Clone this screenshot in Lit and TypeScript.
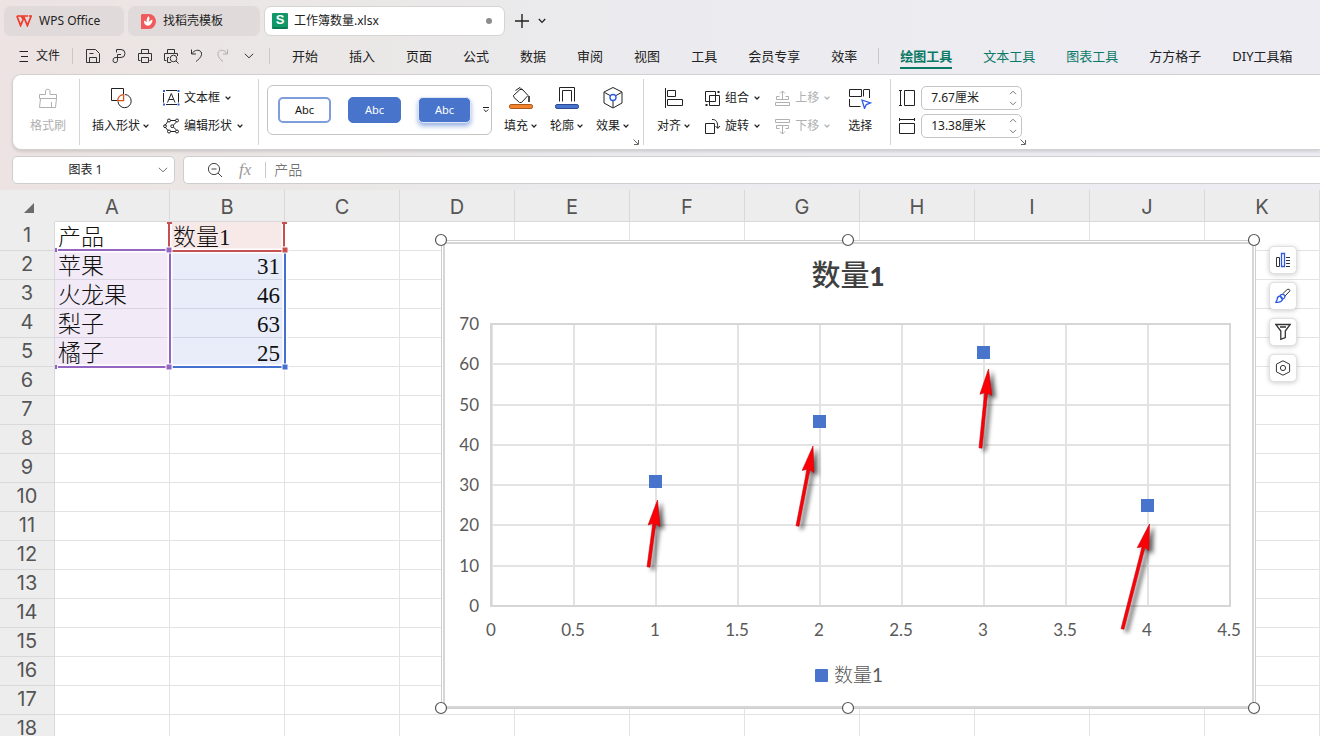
import { LitElement, html, svg, css } from "lit";
import { customElement, state } from "lit/decorators.js";
import { classMap } from "lit/directives/class-map.js";

const draw = (w: number, h: number, body: unknown) =>
  html`<svg class="ico" width=${w} height=${h} viewBox="0 0 ${w} ${h}" aria-hidden="true">${body}</svg>`;

const icons = {
  wps: draw(16, 12, svg`<path stroke="#f03a2a" stroke-width="1.7" d="M.9 1H12.2M.9 1L4.6 10.6L8 2.4L11.4 10.6L15.2 1H13M5 1L8 5"/>`),
  docer: draw(16, 16, svg`<path fill="#f05a5c" stroke="none" d="M2 1H9A6.5 7 0 0 1 9 16H1V2Z"/><path fill="#fff" stroke="none" d="M8.6 3C10 5 9.6 7 8.4 9C10 8.2 11 7 12.4 6.6C12.6 10 10.6 12.6 7.8 12.8C5.4 12.8 3.8 10.6 4 7.6C5.2 8 6 8.6 6.6 9.4C6.4 7 6.8 4.8 8.6 3Z"/>`),
  menu: draw(10, 12, svg`<path d="M.5 1.5H9M2 6.5H9M.5 11.5H9"/>`),
  save: draw(16, 16, svg`<path d="M1.5 1.5H10.5L14.5 5.5V14.5H1.5ZM4.5 14V9.5H11.5V14M4.5 5.5H8.5"/>`),
  export: draw(16, 16, svg`<path d="M5.5 4.5V1.5H10A3.7 3.7 0 0 1 10 9.5H4Q2 10 2 12.3A2 2 0 0 0 6.5 12.5V6.5H10"/>`),
  print: draw(16, 16, svg`<path d="M4.5 5V1.5H11.5V5M3.5 12.5H1.5V5.5H14.5V12.5H12.5M4.5 9.5H11.5V14.5H4.5Z"/>`),
  preview: draw(16, 16, svg`<path d="M4.5 5V1.5H11.5V5M3.5 12.5H1.5V5.5H14.5V8M6 9.5H4.5V14.5H8"/><circle cx="10.5" cy="10.5" r="3.3"/><path d="M13 13L15.5 15.5"/>`),
  undo: draw(16, 16, svg`<path d="M2.5 1.5V6H7M2.8 5.8C6.5 0 13.5 2 12.5 6.8C12 9.5 9 12 7 13.5"/>`),
  redo: draw(16, 16, svg`<path d="M12.5 1.5V6H8M12.2 5.8C8.5 0 2 2 3 6.8C3.6 9.5 5.5 12 8 13.5"/>`),
  down: draw(10, 6, svg`<path d="M.8 .8L5 4.8L9.2 .8"/>`),
  caret: draw(6, 4, svg`<path stroke-width="1.3" d="M.6 .6L3 3L5.4 .6"/>`),
  spinUp: draw(8, 5, svg`<path d="M1 4.2L4 1.2L7 4.2"/>`),
  spinDown: draw(8, 5, svg`<path d="M1 .8L4 3.8L7 .8"/>`),
  plus: draw(14, 14, svg`<path stroke-width="1.4" d="M7 0V14M0 7H14"/>`),
  tabDown: draw(8, 6, svg`<path stroke-width="1.3" d="M.8 1L4 4.4L7.2 1"/>`),
  brush: draw(22, 22, svg`<path d="M2.5 7.5H8.5V4A2.3 2.3 0 0 1 13 4V7.5H19.5V11.5H2.5ZM3.5 11.5L2.5 20.5H18.5L19.5 11.5M14.5 20V15"/>`),
  shapes: draw(22, 22, svg`<path d="M7 13.5H1.5V1.5H13.5V7M15 7.5A6.6 6.6 0 1 1 8 14.5"/><path stroke="#d0531c" stroke-width="1.3" d="M13.6 7.6V13.6H7.6A6.5 6.5 0 0 1 13.6 7.6Z"/>`),
  textbox: draw(17, 16, svg`<path d="M3 .5H14M3 14.5H14M.5 3V12.5M15.5 3V12.5M4.5 12.5L8.3 3.5L12 12.5M6 9.5H10.6"/><path stroke="none" fill="#2d5be3" d="M0 0H2V2H0ZM14.5 0H16.5V2H14.5ZM0 13.5H2V15.5H0ZM14.5 13.5H16.5V15.5H14.5Z"/>`),
  editshape: draw(17, 16, svg`<path d="M5 3.2L2 7.5M2.6 9.5L5 12.6M7.5 2.5H12.5M7.5 13.5H12.5M13.5 4L10.2 7.2M10.2 9L13.5 12"/><circle cx="6" cy="2.5" r="1.5"/><circle cx="14" cy="2.5" r="1.5"/><circle cx="2" cy="8.2" r="1.4"/><circle cx="9.2" cy="8.2" r="1.4"/><circle cx="6" cy="13.5" r="1.5"/><circle cx="14" cy="13.5" r="1.5"/>`),
  fill: draw(24, 24, svg`<path d="M4.5 9.5L11 3.5H13.5L19 9.5L12.5 16.5H10.5L5 11.5ZM6.5 4.5L11 1.5L14 4.5"/><path stroke-width="1.6" d="M20 10V16"/><rect x=".5" y="18.5" width="23" height="4" rx="1.6" fill="#f58229" stroke="#a95a20"/>`),
  outline: draw(24, 24, svg`<path d="M4.5 15.5V1.5H19.5V15.5M7.5 15.5V4.5H16.5V15.5"/><rect x=".5" y="18.5" width="23" height="4" rx="1.6" fill="#4874cb" stroke="#284b94"/>`),
  effect: draw(22, 24, svg`<path d="M11 1.5L20 6V17L11 22L2 17V6ZM2.5 6.5L8 9.5M19.5 6.5L14 9.5M11 15V21.5"/><circle cx="11" cy="11.5" r="3" stroke="#2d5be3" stroke-width="1.4"/>`),
  align: draw(20, 20, svg`<path d="M1.5 0V20"/><path d="M3.5 2.5H11.5V8.5H3.5ZM3.5 11.5H18.5V17.5H3.5Z"/>`),
  group: draw(17, 17, svg`<path d="M1.5 1.5H11.5V11.5H1.5ZM5.5 5.5H15.5V15.5H5.5Z"/><path stroke="none" fill="currentColor" d="M13.5 1H15.5V3H13.5ZM1.5 14H3.5V16H1.5Z"/>`),
  rotate: draw(17, 17, svg`<path d="M1.5 5.5H10.5V15.5H1.5ZM8 1.5C12 1.2 14 4 13.7 10M11.5 8L13.8 10.5L16 8"/>`),
  forward: draw(17, 17, svg`<path d="M1.5 12.5H15.5V15.5H1.5ZM5.5 6.5H2.5V9.5H14.5V6.5H11.5M8.5 9V1M6 3.5L8.5 1L11 3.5"/>`),
  backward: draw(17, 17, svg`<path d="M1.5 1.5H15.5V4.5H1.5ZM5.5 10.5H2.5V7.5H14.5V10.5H11.5M8.5 8V16M6 13.5L8.5 16L11 13.5"/>`),
  select: draw(24, 22, svg`<path d="M1.5 2.5H13.5V9.5H1.5ZM15.5 2.5H21.5V11M15.5 3V9.5M1.5 12V19.5H12.5"/><path stroke="#2d5be3" stroke-width="1.3" d="M14 13L22.5 16L18.3 17.6L16.5 21.5Z"/>`),
  height: draw(18, 18, svg`<path d="M1 1.5H4M1 16.5H4M2.5 1.5V16.5M6.5 1.5H16.5V16.5H6.5Z"/>`),
  width: draw(18, 18, svg`<path d="M1.5 1V4M16.5 1V4M1.5 2.5H16.5M1.5 6.5H16.5V16.5H1.5Z"/>`),
  launcher: draw(6, 6, svg`<path d="M.5 .5L5 5M5.5 1V5.5H1"/>`),
  more: draw(6, 6, svg`<path d="M0 .5H6"/><path d="M.8 2.5L3 4.7L5.2 2.5"/>`),
  search: draw(16, 16, svg`<circle cx="7" cy="7" r="5.6"/><path d="M11 11L15 15M4.5 7H9.5"/>`),
  elements: draw(16, 16, svg`<path stroke="#333" d="M1.5 5.5H4.5V14.5H1.5ZM11 5.5H15M11 8.5H15M11 11.5H15M11 14.5H15"/><path stroke="#2d5be3" stroke-width="1.3" d="M6.5 1.5H9.5V14.5H6.5Z"/>`),
  style: draw(16, 16, svg`<path stroke="#333" d="M7.5 6L12.2 1.5Q14.5 .3 15 2.8L9.5 8.6"/><path stroke="#2d5be3" stroke-width="1.3" d="M5 7.5Q7.5 5.2 9.8 7.5Q10.5 10 8 11L5 7.5M5 8Q2 8.5 2.2 11.5L.8 14.3Q6 15 7.5 11.5Z"/>`),
  filter: draw(16, 18, svg`<path stroke="#333" stroke-width="1.3" d="M.8 1.5H15.2L10.3 8V14.5L5.8 16.3V8ZM5 4H11"/>`),
  settings: draw(16, 16, svg`<path stroke="#333" d="M8 .8L14.6 4.2V11.8L8 15.2L1.4 11.8V4.2Z"/><circle cx="8" cy="8" r="2.6" stroke="#333"/>`),
};

const columns = [..."ABCDEFGHIJK"];
const rowCount = 18;
const sheet: string[][] = [["产品", "数量1"], ["苹果", "31"], ["火龙果", "46"], ["梨子", "63"], ["橘子", "25"]];

const chartX = (v: number) => 492 + v * 164;
const chartY = (v: number) => 606 - (v * 282) / 70;
const points = [[1, 31], [2, 46], [3, 63], [4, 25]];
const arrows = [
  [657.5, 500, 648.5, 567],
  [813, 446, 797.5, 526],
  [988.5, 369, 980.5, 448],
  [1149.5, 524, 1122.5, 629],
];

@customElement("app-root")
export class AppRoot extends LitElement {
  @state() private active = "绘图工具";

  static styles = css`
    * { box-sizing: border-box; }
    :host {
      display: flex; flex-direction: column; height: 100vh; overflow: hidden;
      font: 12px/16px "Noto Sans", "Noto Sans CJK SC", sans-serif; color: #222;
      background: linear-gradient(90deg, #ece3e2 0, #eae8e7 28%, #ebebf0 55%, #ececf2 100%);
    }
    button, input {
      font: inherit; color: inherit; background: none; border: 0; padding: 0; margin: 0; min-width: 0;
    }
    button { display: inline-flex; align-items: center; justify-content: center; white-space: nowrap; flex: none; }
    .ico { flex: none; fill: none; stroke: currentColor; stroke-width: 1; display: block; }
    .tabs { display: flex; gap: 4px; padding: 5px 4px 0; height: 37px; flex: none; align-items: center; }
    .tab { height: 30px; border-radius: 7px; background: #e0dbda; padding: 0 12px; gap: 7px; justify-content: flex-start; width: 120px; }
    .tab.docer { width: 132px; }
    .tab.current { width: 241px; background: #fff; padding: 0 12px 0 7px; gap: 6px; border: 1px solid #d6d3d3; }
    .sheetlogo { width: 16px; height: 16px; background: #129868; border-bottom: 2px solid #0b7c53; color: #fff; font: bold 13px/14px "Liberation Sans", sans-serif; text-align: center; border-radius: 1px; }
    .dot { width: 6px; height: 6px; border-radius: 50%; background: #8c8c8c; margin-left: auto; }
    .new { margin-left: 6px; }
    .newmore { margin-left: 5px; }
    .menu { display: flex; align-items: center; height: 37px; padding-left: 19px; flex: none; }
    .file { gap: 7px; }
    .bar { width: 1px; height: 16px; background: #c9c7c7; flex: none; }
    .quick { display: flex; margin: 0 7px; color: #333; }
    .quick button { width: 26px; height: 26px; }
    .file + .bar { margin-left: 12px; }
    .quick .off, .off { color: #b0b0b0; }
    .cats { display: flex; align-items: center; gap: 31px; margin-left: 22px; font-size: 13px; line-height: 18px; }
    .cats .bar { margin: 0 -10px; }
    .cat { height: 26px; border-bottom: 2px solid transparent; border-top: 2px solid transparent; }
    .cat.ctx { color: #0a7a66; }
    .cat.on { font-weight: 700; border-bottom-color: #0a7a66; }
    .ribbon { display: flex; flex: none; height: 76px; margin-left: 12px; background: #fff; border: 1px solid #d2d0d1; border-right: 0; border-radius: 9px 0 0 9px; box-shadow: 0 2px 3px #0000001c; padding-top: 9px; }
    .grp { display: flex; position: relative; height: 56px; }
    .rule { width: 1px; height: 66px; margin-top: -5px; background: #d4d4d4; flex: none; }
    .big { display: grid; grid-template-rows: 28px 28px; justify-items: center; align-items: center; height: 56px; }
    .lbl { display: inline-flex; align-items: center; gap: 3px; }
    .stack { display: flex; flex-direction: column; }
    .row { display: flex; align-items: center; justify-content: flex-start; gap: 4px; height: 28px; }
    .row .lbl { gap: 5px; }
    .g1 { padding: 0 13px 0 17px; }
    .g2 { padding: 0 15px 0 12px; gap: 14px; }
    .g3 { padding: 0 14px 0 8px; }
    .g4 { padding: 0 18px 0 13px; gap: 14px; }
    .g4 .pick { margin-left: 4px; }
    .g5 { padding: 0 0 0 7px; }
    .effects { display: flex; gap: 13px; margin-left: 12px; }
    .gallery { display: flex; align-items: center; gap: 17px; width: 225px; height: 50px; margin-top: 1px; padding: 0 2px 0 10px; border: 1px solid #c4c4c4; border-radius: 6px; }
    .swatch { width: 53px; height: 26px; border-radius: 5px; font-size: 11px; color: #fff; background: #4874cb; border: 1px solid #4874cb; }
    .swatch.line { background: #fff; color: #111; border: 2px solid #7f9cdb; }
    .swatch.glow { border: 1px solid #dfe7f7; box-shadow: 0 3px 5px #4874cb90; }
    .gallery .expand { margin-left: -5px; }
    .launch { position: absolute; right: 4px; bottom: -5px; color: #666; }
    .g5 .launch { right: -4px; }
    .size { display: flex; align-items: center; gap: 5px; height: 28px; }
    .spin { display: flex; align-items: center; width: 101px; height: 24px; border: 1px solid #c4c4c4; border-radius: 5px; padding: 0 4px 0 9px; }
    .spin input { flex: 1; width: 60px; }
    .spin .stack { gap: 6px; color: #777; }
    .formula { display: flex; gap: 8px; padding: 6px 0 6px 12px; flex: none; height: 40px; }
    .name, .fx { display: flex; align-items: center; height: 28px; background: #fff; border: 1px solid #cfcdce; }
    .name { width: 163px; border-radius: 5px; padding-right: 6px; }
    .name input { flex: 1; text-align: center; }
    .name button { color: #777; }
    .fx { flex: 1; border-radius: 5px 0 0 5px; border-right: 0; padding-left: 23px; color: #444; }
    .fxsign { font: italic 17px/20px "Liberation Serif", serif; color: #9a9a9a; margin: 0 14px 0 16px; }
    .fx .bar { margin-right: 8px; }
    .fx input { flex: 1; font-size: 14px; font-weight: 300; color: #555; height: 24px; padding-bottom: 3px; }
    .sheet { position: relative; flex: 1; overflow: hidden; background: #fff; }
    table { border-collapse: separate; border-spacing: 0; table-layout: fixed; width: 1320px; }
    .corner, .num { width: 55px; }
    th { background: #ededed; font: 400 20px/24px Inter, sans-serif; color: #555; padding: 0; border-right: 1px solid #d9d9d9; border-bottom: 1px solid #d9d9d9; }
    thead th { height: 32px; padding-top: 2px; }
    .corner { border-color: #ededed; padding-left: 3px; }
    .tri { display: block; width: 0; height: 0; margin: 2px auto 0; border-left: 10px solid transparent; border-bottom: 10px solid #6b6b6b; }
    tbody th { height: 29px; padding-bottom: 3px; }
    td { height: 29px; border-right: 1px solid #e3e3e3; border-bottom: 1px solid #e3e3e3; padding: 3px 3px 0; font: 300 23px/24px "Liberation Serif", "Noto Sans CJK SC", serif; color: #111; overflow: hidden; white-space: nowrap; }
    .cat-range { background: #f2ebf7; border-color: #d9d4e0; }
    .head-range { background: #f8e9e9; }
    .val-range { background: #e8edf9; border-color: #ced5e3; text-align: right; padding-right: 4px; }
    .overlay { position: absolute; left: 0; top: 0; pointer-events: none; }
    .chart { position: absolute; left: 430px; top: 40px; }
    .axis { font: 17px Lato, sans-serif; fill: #595959; }
    .legend { font: 300 19px "Noto Sans CJK SC", sans-serif; fill: #595959; }
    .legnum { font: 19px Lato, sans-serif; }
    .title { font: 500 29px "Noto Sans CJK SC", sans-serif; fill: #404040; }
    .titlenum { font: 900 26px Lato, sans-serif; }
    .arrow { fill: #fb0007; stroke: #c80008; stroke-width: 0.6; filter: drop-shadow(4px 3px 2px #0009); }
    .tools { position: absolute; left: 1269px; top: 56px; display: flex; flex-direction: column; gap: 8px; }
    .tools button { width: 28px; height: 28px; background: #fff; border: 1px solid #e0e0e0; border-radius: 5px; box-shadow: 0 1px 5px #0003; }
  `;

  private big(icon: unknown, text: string, arrow = true, cls = "") {
    return html`<button class="big ${cls}">${icon}<span class="lbl">${text}${arrow ? icons.caret : ""}</span></button>`;
  }

  private small(icon: unknown, text: string, cls = "") {
    return html`<button class="row ${cls}">${icon}<span class="lbl">${text}${icons.caret}</span></button>`;
  }

  private cat(name: string, ctx = false) {
    return html`<button class=${classMap({ cat: true, ctx, on: this.active === name })}
      @click=${() => (this.active = name)}>${name}</button>`;
  }

  private size(icon: unknown, label: string, value: string) {
    return html`<div class="size">${icon}<div class="spin">
      <input aria-label=${label} .value=${value}>
      <div class="stack"><button aria-label="增加">${icons.spinUp}</button><button aria-label="减少">${icons.spinDown}</button></div>
    </div></div>`;
  }

  private cell(r: number, c: number) {
    const cls = r === 0 ? (c === 1 ? "head-range" : "") : r < 5 && c === 0 ? "cat-range" : r < 5 && c === 1 ? "val-range" : "";
    return html`<td class=${cls}>${sheet[r]?.[c] ?? ""}</td>`;
  }

  private arrow([x, y, tx, ty]: number[]) {
    const len = Math.hypot(tx - x, ty - y);
    const ux = (tx - x) / len, uy = (ty - y) / len;
    const at = (along: number, side: number) => `${x + ux * along - uy * side},${y + uy * along + ux * side}`;
    const pts = [at(0, 0), at(26, 6), at(24, 1.5), at(len, 1.5), at(len, -1.5), at(24, -1.5), at(26, -6)];
    return svg`<polygon class="arrow" points=${pts.join(" ")} />`;
  }

  private ranges() {
    const edge = (d: string, color: string) =>
      svg`<path d=${d} fill="none" stroke="#fff" stroke-width="5"/><path d=${d} fill="none" stroke=${color} stroke-width="2"/>`;
    const knob = (x: number, y: number, color: string) =>
      svg`<rect x=${x - 3} y=${y - 3} width="6" height="6" fill=${color} stroke="#fff"/>`;
    return html`<svg class="overlay" width="300" height="190" viewBox="0 0 300 190" aria-hidden="true">
      ${edge("M285 63V177H172", "#4670cf")}
      ${edge("M58 60H170V177H58", "#9466c2")}
      ${edge("M169 33V60M172 61H284M284 60V33", "#c5504f")}
      <path d="M167 33H172M282 33H287" stroke="#c5504f" stroke-width="2"/>
      <path d="M56 58V62M56 175V179" stroke="#9466c2" stroke-width="2"/>
      ${knob(169, 60, "#9466c2")}${knob(169, 177, "#9466c2")}
      ${knob(285, 60, "#c5504f")}${knob(285, 177, "#4670cf")}
    </svg>`;
  }

  private chart() {
    const xs = Array.from({ length: 10 }, (_, i) => i / 2);
    const ys = Array.from({ length: 8 }, (_, i) => i * 10);
    return html`<svg class="chart" width="840" height="490" viewBox="430 230 840 490" role="img" aria-label="数量1">
      <rect x="441.5" y="240.5" width="814" height="468" fill="#fff" stroke="#cfcfcf"/>
      <rect x="444" y="243" width="809" height="464" fill="#fff" stroke="#d6d6d6" stroke-width="2"/>
      <text class="title" x="848" y="286" text-anchor="middle">数量<tspan class="titlenum">1</tspan></text>
      <g stroke="#e3e3e3" stroke-width="2">
        ${xs.map((v) => svg`<path d="M${chartX(v)} 324V606"/>`)}
        ${ys.map((v) => svg`<path d="M492 ${Math.round(chartY(v))}H1230"/>`)}
      </g>
      <rect x="491" y="324" width="739" height="282" fill="none" stroke="#d6d6d6" stroke-width="2"/>
      ${xs.map((v) => svg`<text class="axis" x=${chartX(v) - 1} y="636" text-anchor="middle">${v}</text>`)}
      ${ys.map((v) => svg`<text class="axis" x="479" y=${Math.round(chartY(v)) + 6} text-anchor="end">${v}</text>`)}
      ${points.map(([x, y]) => svg`<rect x=${chartX(x) - 7} y=${Math.round(chartY(y)) - 6} width="13" height="13" fill="#4874cb"/>`)}
      <rect x="815" y="669" width="13" height="13" rx="1" fill="#4874cb"/>
      <text class="legend" x="834" y="682">数量<tspan class="legnum">1</tspan></text>
      ${arrows.map((a) => this.arrow(a))}
      ${[240, 708].map((y) => [441, 848, 1254].map((x) => svg`<circle cx=${x} cy=${y} r="5.5" fill="#fff" stroke="#555" stroke-width="1.2"/>`))}
    </svg>`;
  }

  render() {
    return html`
      <div class="tabs">
        <button class="tab">${icons.wps}WPS Office</button>
        <button class="tab docer">${icons.docer}找稻壳模板</button>
        <button class="tab current"><span class="sheetlogo">S</span>工作簿数量.xlsx<span class="dot"></span></button>
        <button class="new" aria-label="新建">${icons.plus}</button>
        <button class="newmore" aria-label="更多">${icons.tabDown}</button>
      </div>
      <div class="menu">
        <button class="file">${icons.menu}文件</button>
        <span class="bar"></span>
        <div class="quick">
          <button aria-label="保存">${icons.save}</button>
          <button aria-label="输出">${icons.export}</button>
          <button aria-label="打印">${icons.print}</button>
          <button aria-label="打印预览">${icons.preview}</button>
          <button aria-label="撤销">${icons.undo}</button>
          <button class="off" aria-label="恢复">${icons.redo}</button>
          <button aria-label="更多">${icons.down}</button>
        </div>
        <span class="bar"></span>
        <nav class="cats">
          ${["开始", "插入", "页面", "公式", "数据", "审阅", "视图", "工具", "会员专享", "效率"].map((n) => this.cat(n))}
          <span class="bar"></span>
          ${["绘图工具", "文本工具", "图表工具"].map((n) => this.cat(n, true))}
          ${["方方格子", "DIY工具箱"].map((n) => this.cat(n))}
        </nav>
      </div>
      <div class="ribbon">
        <div class="grp g1">${this.big(icons.brush, "格式刷", false, "off")}</div>
        <span class="rule"></span>
        <div class="grp g2">
          ${this.big(icons.shapes, "插入形状")}
          <div class="stack">${this.small(icons.textbox, "文本框")}${this.small(icons.editshape, "编辑形状")}</div>
        </div>
        <span class="rule"></span>
        <div class="grp g3">
          <div class="gallery">
            <button class="swatch line">Abc</button><button class="swatch">Abc</button><button class="swatch glow">Abc</button>
            <button class="expand" aria-label="更多样式">${icons.more}</button>
          </div>
          <div class="effects">${this.big(icons.fill, "填充")}${this.big(icons.outline, "轮廓")}${this.big(icons.effect, "效果")}</div>
          <button class="launch" aria-label="形状格式">${icons.launcher}</button>
        </div>
        <span class="rule"></span>
        <div class="grp g4">
          ${this.big(icons.align, "对齐")}
          <div class="stack">${this.small(icons.group, "组合")}${this.small(icons.rotate, "旋转")}</div>
          <div class="stack">${this.small(icons.forward, "上移", "off")}${this.small(icons.backward, "下移", "off")}</div>
          ${this.big(icons.select, "选择", false, "pick")}
        </div>
        <span class="rule"></span>
        <div class="grp g5">
          <div class="stack">${this.size(icons.height, "高度", "7.67厘米")}${this.size(icons.width, "宽度", "13.38厘米")}</div>
          <button class="launch" aria-label="大小和属性">${icons.launcher}</button>
        </div>
      </div>
      <div class="formula">
        <div class="name"><input aria-label="名称框" .value=${"图表 1"}><button aria-label="展开">${icons.down}</button></div>
        <div class="fx">
          <button aria-label="查找">${icons.search}</button><span class="fxsign">fx</span><span class="bar"></span>
          <input aria-label="编辑栏" .value=${"产品"}>
        </div>
      </div>
      <div class="sheet">
        <table>
          <thead><tr><th class="corner"><span class="tri"></span></th>${columns.map((c) => html`<th>${c}</th>`)}</tr></thead>
          <tbody>
            ${Array.from({ length: rowCount }, (_, r) => html`<tr><th class="num">${r + 1}</th>${columns.map((_, c) => this.cell(r, c))}</tr>`)}
          </tbody>
        </table>
        ${this.ranges()}
        ${this.chart()}
        <div class="tools">
          <button aria-label="图表元素">${icons.elements}</button><button aria-label="图表样式">${icons.style}</button>
          <button aria-label="图表筛选器">${icons.filter}</button><button aria-label="设置">${icons.settings}</button>
        </div>
      </div>`;
  }
}
